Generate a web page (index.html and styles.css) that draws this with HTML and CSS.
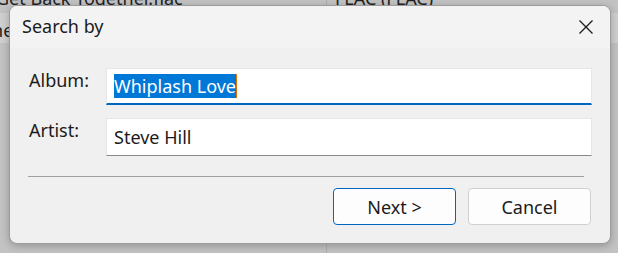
FILE: index.html
```html
<!DOCTYPE html>
<html lang="en">
<head>
  <meta charset="UTF-8">
  <title>Search by</title>
  <link rel="stylesheet" href="styles.css">
</head>
<body>

  <div class="file-list">
    <div class="file-row">
      <div class="file-name">Get Back Together.flac</div>
      <div class="file-type">FLAC (FLAC)</div>
    </div>
    <div class="file-row file-row--light">
      <div class="file-name file-name--short">One</div>
      <div class="file-type"></div>
    </div>
    <div class="file-row file-row--rest">
      <div class="file-name"></div>
      <div class="file-type"></div>
    </div>
  </div>

  <div class="dialog">
    <div class="dialog-title">
      <span>Search by</span>
      <button class="close" aria-label="Close">
        <svg width="14" height="14" viewBox="0 0 14 14">
          <path d="M0.5 0.5 L13.5 13.5 M13.5 0.5 L0.5 13.5" stroke="#1a1a1a" stroke-width="1.3" fill="none"/>
        </svg>
      </button>
    </div>

    <div class="dialog-body">
      <div class="field">
        <label class="field-label">Album:</label>
        <div class="field-input field-input--focus"><span class="selected">Whiplash Love</span></div>
      </div>
      <div class="field">
        <label class="field-label">Artist:</label>
        <div class="field-input">Steve Hill</div>
      </div>

      <hr class="divider">

      <div class="buttons">
        <button class="btn btn--default">Next &gt;</button>
        <button class="btn">Cancel</button>
      </div>
    </div>
  </div>

</body>
</html>
```

FILE: styles.css
```css
body, html {
  margin: 0;
  padding: 0;
  height: 100%;
  overflow: hidden;
}

body {
  position: relative;
  background-color: #c3c3c3;
  font-family: "Noto Sans", "Open Sans", sans-serif;
  color: #1b1b1b;
}

/* window behind the dialog */
.file-list {
  display: flex;
  flex-direction: column;
  height: calc(100% + 12px);
  margin-top: -12px;
}

.file-row {
  display: flex;
  height: 25px;
  font-size: 18px;
  line-height: 20px;
  color: #222;
}

.file-row--light {
  height: 30px;
  line-height: 34px;
  background-color: #d0d0d0;
}

.file-row--rest {
  flex: 1;
}

.file-name {
  width: 327px;
  box-sizing: border-box;
  text-indent: -4px;
  white-space: nowrap;
  overflow: hidden;
  border-right: 1px solid #b0b0b0;
}

.file-name--short {
  text-indent: -22px;
}

.file-type {
  padding-left: 8px;
  white-space: nowrap;
}

.dialog {
  position: absolute;
  left: 9px;
  top: 5px;
  width: 600px;
  height: 237px;
  border: 1px solid #9c9c9c;
  border-radius: 8px;
  overflow: hidden;
  background-color: #f0f0f0;
  box-shadow: 0 2px 8px rgba(0, 0, 0, 0.25);
  display: flex;
  flex-direction: column;
}

.dialog-title {
  display: flex;
  align-items: center;
  justify-content: space-between;
  height: 42px;
  padding: 0 17px 0 12px;
  background-color: #f3f3f3;
  font-size: 18px;
}

.dialog-title span {
  margin-top: -2px;
}

.close {
  display: flex;
  border: none;
  background: none;
  padding: 0;
}

.dialog-body {
  padding: 20px 18px 0 19px;
  display: flex;
  flex-direction: column;
}

.field {
  display: flex;
  margin-bottom: 13px;
}

.field-label {
  width: 77px;
  font-size: 18px;
  line-height: 22px;
  padding-top: 1px;
}

.field-input {
  flex: 1;
  height: 38px;
  box-sizing: border-box;
  padding: 0 7px;
  background-color: #fff;
  border: 1px solid #e6e6e6;
  border-bottom: 1px solid #8a8a8a;
  font-size: 18px;
  line-height: 36px;
  color: #1b1b1b;
}

.field-input--focus {
  height: 37px;
  line-height: 34px;
  border-bottom: 2px solid #0067c0;
}

.selected {
  background-color: #0078d7;
  color: #fff;
  padding: 0;
  border-right: 1px solid #e07000;
}

.divider {
  margin: 7px 8px 0 -1px;
  border: none;
  border-top: 1px solid #a0a0a0;
  height: 0;
}

.buttons {
  display: flex;
  justify-content: flex-end;
  gap: 12px;
  margin-top: 11px;
  margin-right: 1px;
}

.btn {
  width: 123px;
  height: 37px;
  border: 1px solid #d0d0d0;
  border-radius: 4px;
  background-color: #fdfdfd;
  font-family: "Noto Sans", "Open Sans", sans-serif;
  font-size: 18px;
  line-height: 22px;
  color: #1b1b1b;
}

.btn--default {
  border-color: #0067c0;
}
```
